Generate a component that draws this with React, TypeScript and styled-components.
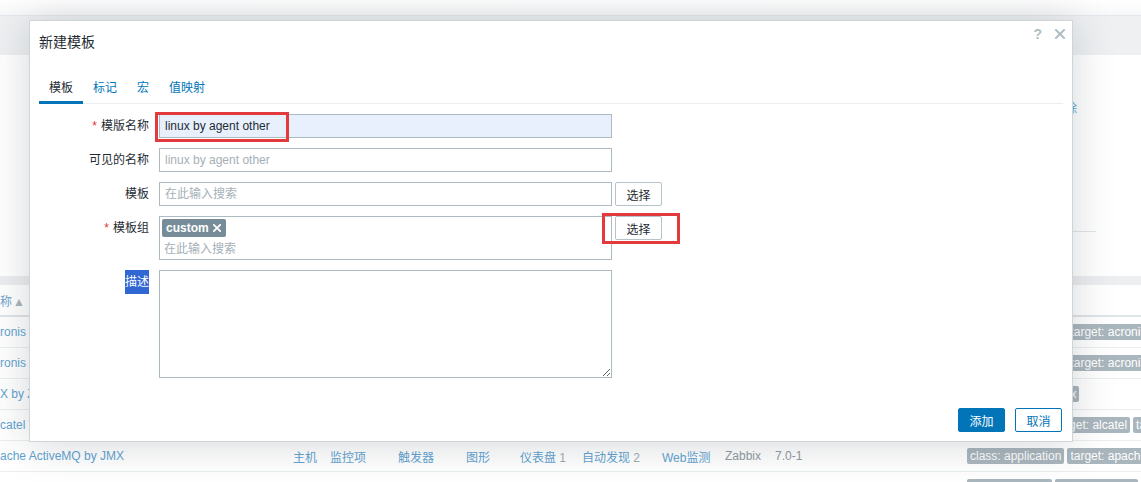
import React from "react";
import styled, { createGlobalStyle } from "styled-components";

const GlobalStyle = createGlobalStyle`
  html, body { margin: 0; padding: 0; background: #ffffff; }
  body {
    font-family: "Liberation Sans", "Noto Sans CJK SC", sans-serif;
    font-size: 12px;
    color: #1f2c33;
  }
  #root { width: 1141px; height: 482px; overflow: hidden; }
  * { box-sizing: border-box; }
`;

const Page = styled.div`
  position: relative;
  width: 1141px;
  height: 482px;
  overflow: hidden;
  display: flex;
  flex-direction: column;
  background: #ffffff;
  & > * { flex-shrink: 0; }
`;

const TopStrip = styled.div`
  height: 15px;
  background: linear-gradient(#ffffff, #f7f8f9);
`;

const HeaderBand = styled.div`
  height: 40px;
  background: #eef0f2;
  border-top: 1px solid #e3e7ea;
`;

const FilterArea = styled.div`
  height: 221px;
  display: flex;
  flex-direction: column;
  padding: 46px 0 44px 1065px;
`;

const FilterLink = styled.span`
  color: #62a3d1;
  font-size: 12px;
  line-height: 16px;
`;

const FilterRule = styled.div`
  margin-top: auto;
  width: 31px;
  height: 1px;
  background: #e2e6e9;
`;

const GrayBand = styled.div`
  height: 9px;
  background: #eceef0;
`;

const columns = "293px 37px 68px 68px 54px 62px 80px 63px 50px 192px 1fr";

const TableHead = styled.div`
  height: 32px;
  display: grid;
  grid-template-columns: ${columns};
  align-items: center;
  border-bottom: 2px solid #dfe4e7;
  color: #6fa3cb;
  white-space: nowrap;
`;

const SortArrow = styled.span`
  color: #a9b4ba;
  font-size: 12px;
  margin-left: 1px;
`;

const Row = styled.div`
  height: 31px;
  display: grid;
  grid-template-columns: ${columns};
  align-items: center;
  border-bottom: 1px solid #ebeef0;
  white-space: nowrap;
`;

const Cell = styled.span<{ $muted?: boolean }>`
  color: ${(p) => (p.$muted ? "#8e9ba2" : "#62a3d1")};
  overflow: hidden;
`;

const Count = styled.span`
  color: #9fabb1;
`;

const TagList = styled.div`
  display: flex;
  gap: 3px;
  overflow: hidden;
`;

const RowTag = styled.span`
  flex: none;
  background: #aab6bd;
  color: #ffffff;
  padding: 1px 3px;
  border-radius: 2px;
  line-height: 14px;
`;

/* ---------- dialog ---------- */

const Dialog = styled.div`
  position: absolute;
  left: 29px;
  top: 20px;
  width: 1044px;
  height: 422px;
  background: #ffffff;
  border: 1px solid #cdd5d9;
  box-shadow: 0 2px 40px rgba(40, 50, 60, 0.2);
  display: flex;
  flex-direction: column;
`;

const DialogHeader = styled.div`
  display: flex;
  align-items: flex-start;
  padding: 8px 7px 0 9px;
`;

const Title = styled.h4`
  margin: 4px 0 0;
  font-size: 14px;
  line-height: 18px;
  font-weight: normal;
  color: #1f2c33;
`;

const HeaderControls = styled.div`
  margin-left: auto;
  display: flex;
  align-items: center;
  gap: 13px;
  height: 10px;
  color: #b0bec5;
`;

const HelpMark = styled.span`
  font-size: 14px;
  font-weight: bold;
  line-height: 10px;
`;

const Body = styled.div`
  padding: 0 9px;
`;

const TabList = styled.div`
  margin-top: 19px;
  display: flex;
  border-bottom: 1px solid #ebeef0;
`;

const TabItem = styled.span<{ $active?: boolean }>`
  padding: 10px 10px 5px;
  line-height: 16px;
  margin-bottom: -1px;
  border-bottom: 3px solid ${(p) => (p.$active ? "#0275b8" : "transparent")};
  color: ${(p) => (p.$active ? "#1f2c33" : "#0275b8")};
`;

const Form = styled.div`
  margin-top: 10px;
  display: grid;
  grid-template-columns: 110px max-content;
  column-gap: 10px;
  row-gap: 10px;
`;

const Label = styled.div`
  text-align: right;
  line-height: 24px;
  color: #1f2c33;
  white-space: nowrap;
`;

const Req = styled.span`
  color: #e33734;
  margin-right: 4px;
`;

const Selected = styled.span`
  background: #3067d2;
  color: #ffffff;
  display: inline-block;
  line-height: 24px;
`;

const Field = styled.div`
  display: flex;
  align-items: flex-start;
  gap: 3px;
`;

const TextInput = styled.input<{ $autofill?: boolean }>`
  width: 453px;
  height: 24px;
  margin: 0;
  padding: 0 5px;
  border: 1px solid #acbbc2;
  border-radius: 0;
  background: ${(p) => (p.$autofill ? "#e8f0fe" : "#ffffff")};
  font-family: inherit;
  font-size: 12px;
  color: #1f2c33;
  outline: none;
  &::placeholder { color: #a5b0b6; opacity: 1; }
`;

const Multi = styled.div`
  width: 453px;
  height: 44px;
  border: 1px solid #acbbc2;
  padding: 2px 2px 0;
  display: flex;
  flex-direction: column;
`;

const GroupTag = styled.span`
  align-self: flex-start;
  flex: none;
  height: 18px;
  display: inline-flex;
  align-items: center;
  gap: 4px;
  padding: 0 5px 0 4px;
  background: #768d99;
  color: #ffffff;
  font-weight: bold;
  border-radius: 2px;
`;

const SearchLine = styled.span`
  flex: none;
  line-height: 20px;
  padding: 2px 0 0 2px;
  color: #a5b0b6;
`;

const SelectButton = styled.button`
  width: 47px;
  height: 24px;
  margin: 0;
  padding: 0;
  background: #ffffff;
  border: 1px solid #b6c3c9;
  border-radius: 2px;
  font-family: inherit;
  font-size: 12px;
  color: #1f2c33;
`;

const TextArea = styled.textarea`
  display: block;
  width: 453px;
  height: 108px;
  margin: 0;
  border: 1px solid #acbbc2;
  border-radius: 0;
  resize: vertical;
  font-family: inherit;
  font-size: 12px;
  outline: none;
`;

const Footer = styled.div`
  margin-top: auto;
  display: flex;
  justify-content: flex-end;
  gap: 10px;
  padding: 0 10px 9px;
`;

const FooterButton = styled.button<{ $primary?: boolean }>`
  width: 47px;
  height: 24px;
  margin: 0;
  padding: 0;
  border: 1px solid #0275b8;
  border-radius: 2px;
  background: ${(p) => (p.$primary ? "#0275b8" : "#ffffff")};
  color: ${(p) => (p.$primary ? "#ffffff" : "#0275b8")};
  font-family: inherit;
  font-size: 12px;
`;

const Annotation = styled.div<{ $x: number; $y: number; $w: number; $h: number }>`
  position: absolute;
  left: ${(p) => p.$x}px;
  top: ${(p) => p.$y}px;
  width: ${(p) => p.$w}px;
  height: ${(p) => p.$h}px;
  border: 3px solid #e23b3e;
  pointer-events: none;
`;

const Cross = ({ size, stroke, color }: { size: number; stroke: number; color: string }) => (
  <svg width={size} height={size} viewBox="0 0 10 10">
    <path d="M1 1 L9 9 M9 1 L1 9" stroke={color} strokeWidth={stroke} strokeLinecap="square" />
  </svg>
);

const rows: { name: string; tags: string[] }[] = [
  { name: "ronis", tags: ["class: application", "target: acronis"] },
  { name: "ronis", tags: ["class: application", "target: acronis"] },
  { name: "X by Z", tags: ["class: application", "x"] },
  { name: "catel T", tags: ["class: network", "target: alcatel", "target: timetra"] },
  { name: "ache ActiveMQ by JMX", tags: ["class: application", "target: apache"] },
  { name: "ache Cassandra by JMX", tags: ["class: software", "target: apache"] },
];

export default function App() {
  return (
    <>
      <GlobalStyle />
      <Page>
        <TopStrip />
        <HeaderBand />
        <FilterArea>
          <FilterLink>除</FilterLink>
          <FilterRule />
        </FilterArea>
        <GrayBand />
        <TableHead>
          <span>
            称<SortArrow>▲</SortArrow>
          </span>
        </TableHead>
        {rows.map((r, i) => (
          <Row key={i}>
            <Cell>{r.name}</Cell>
            <Cell>主机</Cell>
            <Cell>监控项</Cell>
            <Cell>触发器</Cell>
            <Cell>图形</Cell>
            <Cell>
              仪表盘 <Count>1</Count>
            </Cell>
            <Cell>
              自动发现 <Count>2</Count>
            </Cell>
            <Cell>Web监测</Cell>
            <Cell $muted>Zabbix</Cell>
            <Cell $muted>7.0-1</Cell>
            <TagList>
              {r.tags.map((t) => (
                <RowTag key={t}>{t}</RowTag>
              ))}
            </TagList>
          </Row>
        ))}

        <Dialog>
          <DialogHeader>
            <Title>新建模板</Title>
            <HeaderControls>
              <HelpMark>?</HelpMark>
              <Cross size={10} stroke={2} color="#b0bec5" />
            </HeaderControls>
          </DialogHeader>
          <Body>
            <TabList>
              <TabItem $active>模板</TabItem>
              <TabItem>标记</TabItem>
              <TabItem>宏</TabItem>
              <TabItem>值映射</TabItem>
            </TabList>
            <Form>
              <Label>
                <Req>*</Req>模版名称
              </Label>
              <Field>
                <TextInput $autofill readOnly value="linux by agent other" />
              </Field>

              <Label>可见的名称</Label>
              <Field>
                <TextInput readOnly placeholder="linux by agent other" />
              </Field>

              <Label>模板</Label>
              <Field>
                <TextInput readOnly placeholder="在此输入搜索" />
                <SelectButton>选择</SelectButton>
              </Field>

              <Label>
                <Req>*</Req>模板组
              </Label>
              <Field>
                <Multi>
                  <GroupTag>
                    custom
                    <Cross size={8} stroke={2.2} color="#ffffff" />
                  </GroupTag>
                  <SearchLine>在此输入搜索</SearchLine>
                </Multi>
                <SelectButton>选择</SelectButton>
              </Field>

              <Label>
                <Selected>描述</Selected>
              </Label>
              <Field>
                <TextArea readOnly />
              </Field>
            </Form>
          </Body>
          <Footer>
            <FooterButton $primary>添加</FooterButton>
            <FooterButton>取消</FooterButton>
          </Footer>
        </Dialog>

        <Annotation $x={155} $y={112} $w={134} $h={30} />
        <Annotation $x={602} $y={213} $w={78} $h={31} />
      </Page>
    </>
  );
}
